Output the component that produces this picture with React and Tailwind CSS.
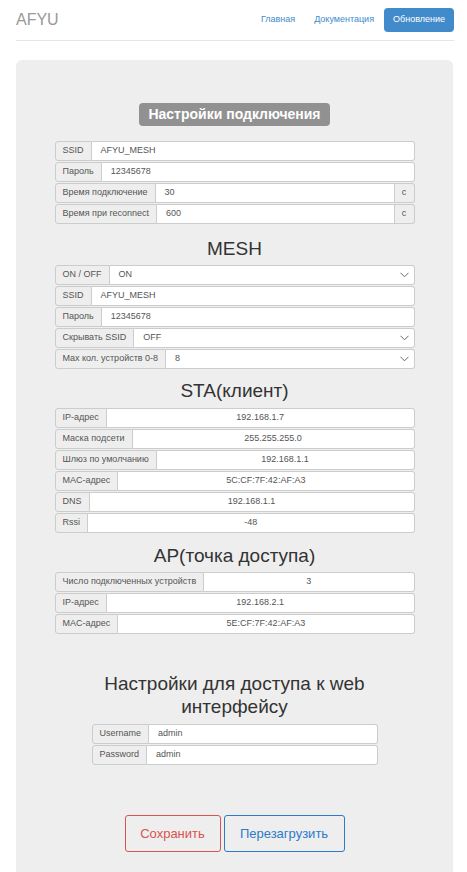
import React from 'react';

const Chevron = () => (
  <svg width="9" height="6" viewBox="0 0 9 6" className="mr-[5px]">
    <path d="M0.5 0.8 L4.5 4.8 L8.5 0.8" fill="none" stroke="#666" strokeWidth="1" />
  </svg>
);

const Row = ({ label, value, suffix, select, center }) => (
  <div className="flex h-[20px] text-[9px] text-[#555]">
    <span className="flex items-center px-[7px] bg-[#eee] border border-[#ccc] rounded-l-[3px] whitespace-nowrap">
      {label}
    </span>
    <div
      className={`flex-1 flex items-center bg-white border border-l-0 border-[#ccc] ${
        suffix ? '' : 'rounded-r-[3px]'
      } ${center ? 'justify-center' : 'justify-between pl-[9px]'}`}
    >
      <span>{value}</span>
      {select && <Chevron />}
    </div>
    {suffix && (
      <span className="flex items-center justify-center w-[20px] bg-[#eee] border border-l-0 border-[#ccc] rounded-r-[3px]">
        {suffix}
      </span>
    )}
  </div>
);

const Heading = ({ children, className = '' }) => (
  <h3 className={`text-center text-[19px] leading-[22px] text-[#333] ${className}`}>{children}</h3>
);

const App = () => {
  return (
    <div className="min-h-[872px] bg-white" style={{ fontFamily: '"Liberation Sans", Arial, sans-serif' }}>
      <div className="ml-[16px] w-[438px]">
        <div className="flex items-center justify-between h-[32px] mt-[4px] border-b border-[#e5e5e5] pb-[4px] box-content">
          <span className="text-[16px] text-[#999]">AFYU</span>
          <nav className="flex items-center text-[9px] text-[#428bca]">
            <span className="px-[9px]">Главная</span>
            <span className="pl-[10px] pr-[10px]">Документация</span>
            <span className="flex items-center h-[24px] px-[9px] bg-[#428bca] text-white rounded-[4px]">
              Обновление
            </span>
          </nav>
        </div>

        <div className="mt-[19px] w-[437px] bg-[#eee] rounded-t-[6px] pt-[43px] pb-[40px] min-h-[820px]">
          <div className="flex justify-center">
            <span className="inline-flex items-center h-[23px] px-[9px] rounded-[4px] bg-[#919191] text-white font-bold text-[14px]">
              Настройки подключения
            </span>
          </div>

          <div className="w-[360px] mx-auto mt-[15px] flex flex-col gap-[1px]">
            <Row label="SSID" value="AFYU_MESH" />
            <Row label="Пароль" value="12345678" />
            <Row label="Время подключение" value="30" suffix="c" />
            <Row label="Время при reconnect" value="600" suffix="c" />
          </div>

          <Heading className="mt-[14px] mb-[5px]">MESH</Heading>
          <div className="w-[360px] mx-auto flex flex-col gap-[1px]">
            <Row label="ON / OFF" value="ON" select />
            <Row label="SSID" value="AFYU_MESH" />
            <Row label="Пароль" value="12345678" />
            <Row label="Скрывать SSID" value="OFF" select />
            <Row label="Max кол. устройств 0-8" value="8" select />
          </div>

          <Heading className="mt-[11px] mb-[6px]">STA(клиент)</Heading>
          <div className="w-[360px] mx-auto flex flex-col gap-[1px]">
            <Row label="IP-адрес" value="192.168.1.7" center />
            <Row label="Маска подсети" value="255.255.255.0" center />
            <Row label="Шлюз по умолчанию" value="192.168.1.1" center />
            <Row label="MAC-адрес" value="5C:CF:7F:42:AF:A3" center />
            <Row label="DNS" value="192.168.1.1" center />
            <Row label="Rssi" value="-48" center />
          </div>

          <Heading className="mt-[12px] mb-[5px]">AP(точка доступа)</Heading>
          <div className="w-[360px] mx-auto flex flex-col gap-[1px]">
            <Row label="Число подключенных устройств" value="3" center />
            <Row label="IP-адрес" value="192.168.2.1" center />
            <Row label="MAC-адрес" value="5E:CF:7F:42:AF:A3" center />
          </div>

          <Heading className="w-[290px] mx-auto mt-[38px] mb-[6px] leading-[23px]">
            Настройки для доступа к web интерфейсу
          </Heading>
          <div className="w-[286px] mx-auto flex flex-col gap-[1px]">
            <Row label="Username" value="admin" />
            <Row label="Password" value="admin" />
          </div>

          <div className="flex justify-center gap-[3px] mt-[50px]">
            <button className="h-[37px] w-[96px] border border-[#d9534f] text-[#d9534f] rounded-[3px] text-[13px]">
              Сохранить
            </button>
            <button className="h-[37px] w-[121px] border border-[#2b7bc8] text-[#2b7bc8] rounded-[3px] text-[13px]">
              Перезагрузить
            </button>
          </div>
        </div>
      </div>
    </div>
  );
};

export default App;
